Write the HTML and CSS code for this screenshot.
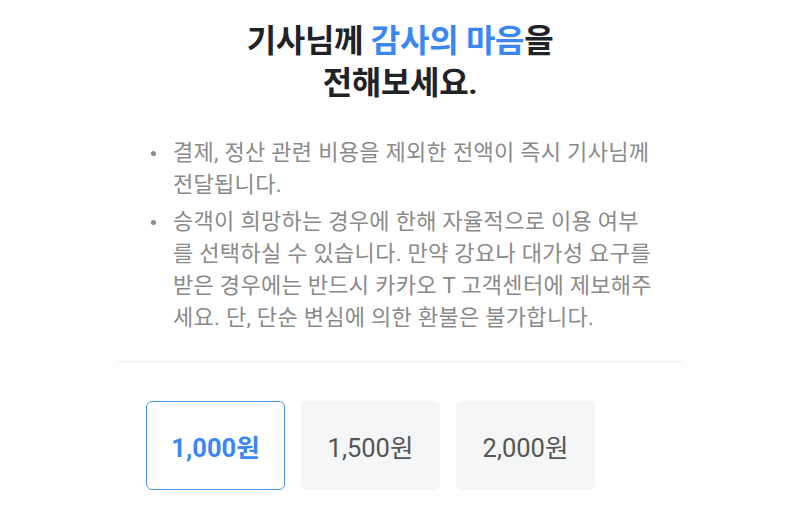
FILE: index.html
```html
<!DOCTYPE html>
<html lang="ko">
<head>
    <meta charset="UTF-8">
    <meta name="viewport" content="width=device-width, initial-scale=1.0">
    <title>감사의 마음</title>
    <link rel="stylesheet" href="styles.css">
</head>
<body>
    <div class="sheet">
        <h1 class="title">기사님께 <span class="accent">감사의 마음</span>을<br>전해보세요.</h1>

        <ul class="notice">
            <li>결제, 정산 관련 비용을 제외한 전액이 즉시 기사님께 전달됩니다.</li>
            <li>승객이 희망하는 경우에 한해 자율적으로 이용 여부를 선택하실 수 있습니다. 만약 강요나 대가성 요구를 받은 경우에는 반드시 카카오 T 고객센터에 제보해주세요. 단, 단순 변심에 의한 환불은 불가합니다.</li>
        </ul>

        <div class="divider"></div>

        <div class="amounts">
            <button class="amount selected">1,000원</button>
            <button class="amount">1,500원</button>
            <button class="amount">2,000원</button>
        </div>
    </div>
</body>
</html>
```

FILE: styles.css
```css
body {
    margin: 0;
    padding: 0;
    background-color: #ffffff;
    font-family: Roboto, "Noto Sans CJK KR", sans-serif;
}

.sheet {
    width: 564px;
    margin: 0 auto;
    padding-top: 20px;
}

.title {
    margin: 0;
    text-align: center;
    font-size: 32px;
    line-height: 42px;
    font-weight: 700;
    color: #1f2328;
    letter-spacing: -0.3px;
}

.title .accent {
    color: #3b87f2;
}

.notice {
    margin: 33px 0 0;
    padding: 0 26px 0 55px;
    list-style: none;
}

.notice li {
    position: relative;
    font-size: 22px;
    line-height: 32px;
    color: #8a8a8a;
    margin-bottom: 5px;
    letter-spacing: 0.3px;
}

.notice li::before {
    content: "";
    position: absolute;
    left: -22px;
    top: 14px;
    width: 5px;
    height: 5px;
    border-radius: 50%;
    background: #8a8a8a;
}

.divider {
    height: 1px;
    background: #ececec;
    margin-top: 27px;
}

.amounts {
    display: flex;
    gap: 16px;
    padding: 39px 28px 0;
}

.amount {
    width: 139px;
    height: 89px;
    border: none;
    border-radius: 6px;
    background: #f5f6f8;
    color: #555555;
    font-family: Roboto, "Noto Sans CJK KR", sans-serif;
    font-size: 25.5px;
}

.amount.selected {
    background: #ffffff;
    border: 1.5px solid #4a8fe8;
    color: #3b87f2;
    font-weight: 700;
}
```
